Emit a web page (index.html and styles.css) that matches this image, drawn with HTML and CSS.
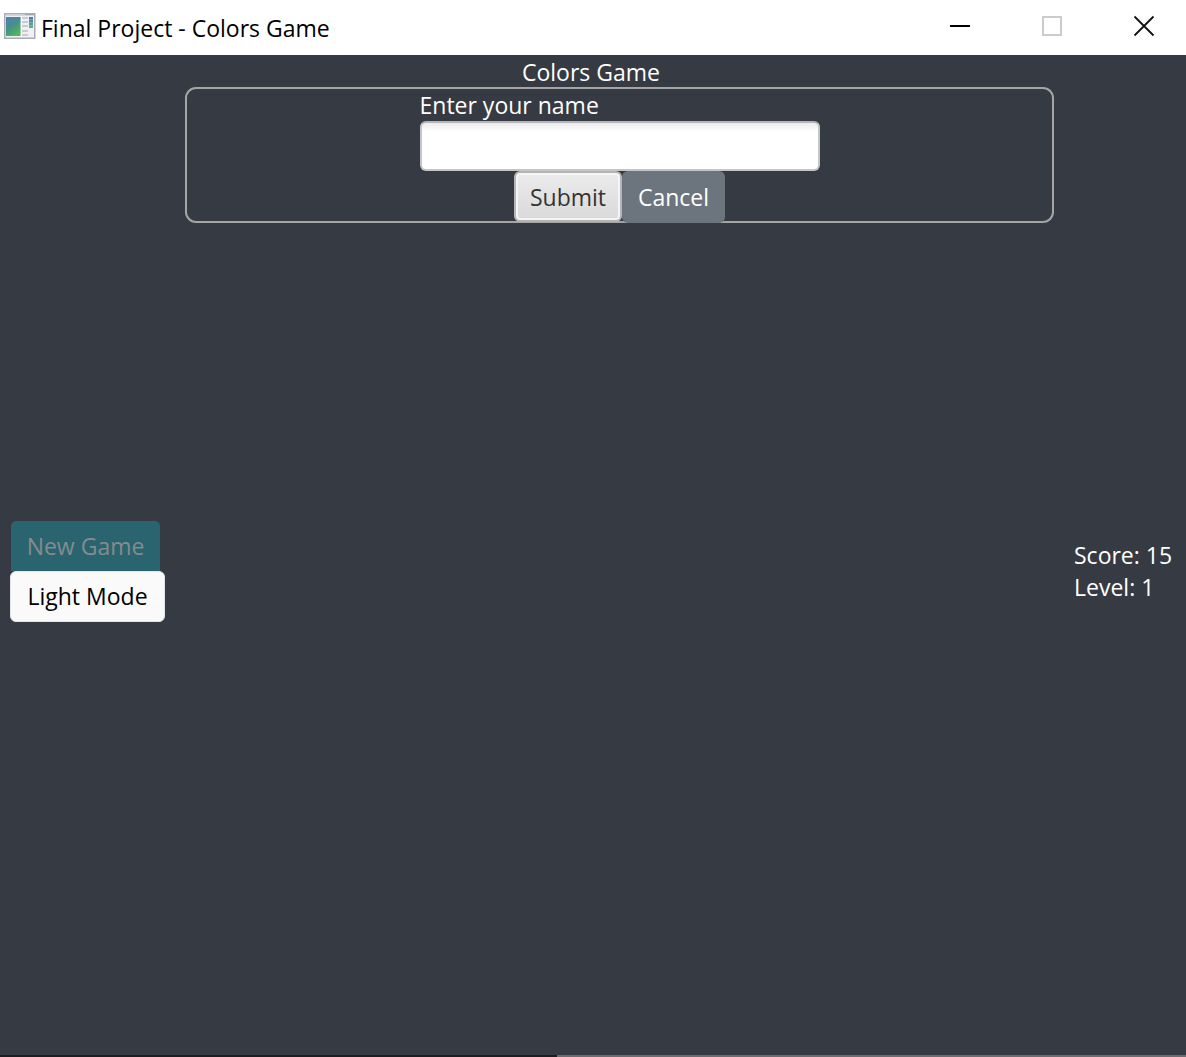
FILE: index.html
```html
<!DOCTYPE html>
<html lang="en">
<head>
<meta charset="utf-8">
<title>Final Project - Colors Game</title>
<link rel="stylesheet" href="styles.css">
</head>
<body>
<header class="titlebar">
  <svg class="app-icon" viewBox="0 0 32 26" aria-hidden="true">
    <defs>
      <linearGradient id="screen" x1="0" y1="0" x2=".6" y2="1">
        <stop offset="0" stop-color="#4b7fa9"/>
        <stop offset=".5" stop-color="#459087"/>
        <stop offset="1" stop-color="#50b463"/>
      </linearGradient>
      <linearGradient id="bar" x1="0" y1="0" x2="0" y2="1">
        <stop offset="0" stop-color="#4879ac"/>
        <stop offset="1" stop-color="#62b584"/>
      </linearGradient>
    </defs>
    <rect x=".75" y=".75" width="30" height="24.5" fill="#eef0f3" stroke="#a9adb3" stroke-width="1.5"/>
    <path d="M1.5 2h28.5" stroke="#c9ced9" stroke-width="1.5"/>
    <path d="M21 1.5h9" stroke="#9fa5b2"/>
    <rect x="2" y="4" width="14.5" height="19" fill="url(#screen)"/>
    <path d="M2 15Q8 10 16.500 10V4H2z" fill="#5387ac" opacity=".35"/>
    <path d="M17.5 4v20" stroke="#fff"/>
    <path d="M18 5h6M18 9h6M18 13h6M18 18h6M18 22h6" stroke="#c9cbce" stroke-width="2"/>
    <rect x="25" y="4" width="4" height="11" fill="url(#bar)"/>
    <path d="M25 6.500h4M25 9.500h4M25 12.500h4" stroke="#8fb9c9" stroke-width=".6"/>
  </svg>
  <span class="window-title">Final Project - Colors Game</span>
  <div class="window-controls">
    <button class="window-button" type="button" aria-label="Minimize"><svg viewBox="0 0 22 22"><path d="M1 11h20" stroke="#000" stroke-width="2"/></svg></button>
    <button class="window-button" type="button" aria-label="Maximize" disabled><svg viewBox="0 0 22 22"><path d="M2 2h18v18H2z" fill="none" stroke="#ccc" stroke-width="2"/></svg></button>
    <button class="window-button" type="button" aria-label="Close"><svg viewBox="0 0 22 22"><path d="M1.500 1.500l19 19M20.500 1.500l-19 19" stroke="#111" stroke-width="1.800"/></svg></button>
  </div>
</header>
<main class="game">
  <h1 class="heading">Colors Game</h1>
  <div class="board">
    <nav class="menu">
      <button class="button new-game" type="button" disabled>New Game</button>
      <button class="button light-mode" type="button">Light Mode</button>
    </nav>
    <form class="name-form">
      <div class="field">
        <label for="player">Enter your name</label>
        <input class="name-input" id="player" type="text">
      </div>
      <div class="actions">
        <button class="button submit" type="submit">Submit</button>
        <button class="button cancel" type="button">Cancel</button>
      </div>
    </form>
    <aside class="stats">
      <p class="stat">Score: 15</p>
      <p class="stat">Level: 1</p>
    </aside>
  </div>
</main>
<div class="edge"></div>
</body>
</html>
```
FILE: styles.css
```css
* {
  box-sizing: border-box;
}

body {
  display: flex;
  flex-direction: column;
  min-height: 100vh;
  margin: 0;
  background: #363a42;
  color: #fff;
  font: 23px/32px "Open Sans", "Noto Sans", sans-serif;
}

.titlebar {
  display: flex;
  align-items: center;
  height: 55px;
  padding-left: 4px;
  background: #fff;
  color: #000;
}

.app-icon {
  width: 32px;
  height: 26px;
  margin: 0 5px 4px 0;
}

.window-controls {
  display: flex;
  align-self: stretch;
  margin-left: auto;
}

.window-button {
  display: flex;
  align-items: center;
  justify-content: center;
  width: 92px;
  padding: 0 0 4px 8px;
  border: 0;
  background: none;
}

.window-button svg {
  width: 22px;
  height: 22px;
}

.game {
  display: flex;
  flex: 1;
  flex-direction: column;
}

.heading {
  margin: 0;
  padding: 2px 4px 0 0;
  font-size: 23px;
  font-weight: 400;
  line-height: 30px;
  text-align: center;
}

.board {
  display: grid;
  flex: 1;
  grid-template-columns: 155px 1fr 97px;
  gap: 20px;
  padding: 0 15px 0 10px;
}

.menu {
  display: flex;
  flex-direction: column;
  align-items: flex-start;
  justify-content: center;
}

.button {
  height: 51px;
  padding: 0;
  border: 0;
  border-radius: 6px;
  font: inherit;
}

.new-game {
  width: 149px;
  height: 50px;
  margin-left: 1px;
  border-radius: 5px 5px 0 0;
  background: #29646f;
  color: #858b8e;
}

.light-mode {
  width: 155px;
  border: 1px solid #e3e4e5;
  background: #fafafa;
  color: #000;
}

.name-form {
  display: flex;
  flex-direction: column;
  align-items: center;
  align-self: start;
  padding-top: 2px;
  border-radius: 11px;
  box-shadow: inset 0 0 0 2px #a5a5a5;
}

.field {
  display: flex;
  flex-direction: column;
  width: 400px;
  max-width: 100%;
}

.name-input {
  height: 50px;
  padding: 0 14px;
  border: 2px solid #c5c5c5;
  border-top-color: #b5b5b5;
  border-radius: 6px;
  background: linear-gradient(#ececec, #fff 9px);
  color: #333;
  font: inherit;
}

.actions {
  display: flex;
  height: 52px;
}

.submit {
  width: 108px;
  border: 2px solid #b5b5b5;
  background: linear-gradient(#ececec, #d9d9d9);
  box-shadow: inset 0 0 0 2px #f5f5f5;
  color: #333;
}

.cancel {
  width: 103px;
  height: 52px;
  background: #6c757d;
  color: #fff;
}

.stats {
  display: flex;
  flex-direction: column;
  justify-content: center;
}

.stat {
  margin: 0;
  white-space: nowrap;
}

.edge {
  height: 2px;
  background: linear-gradient(90deg, #1e1c1f 47%, #6d6c6f 47%);
}
```
